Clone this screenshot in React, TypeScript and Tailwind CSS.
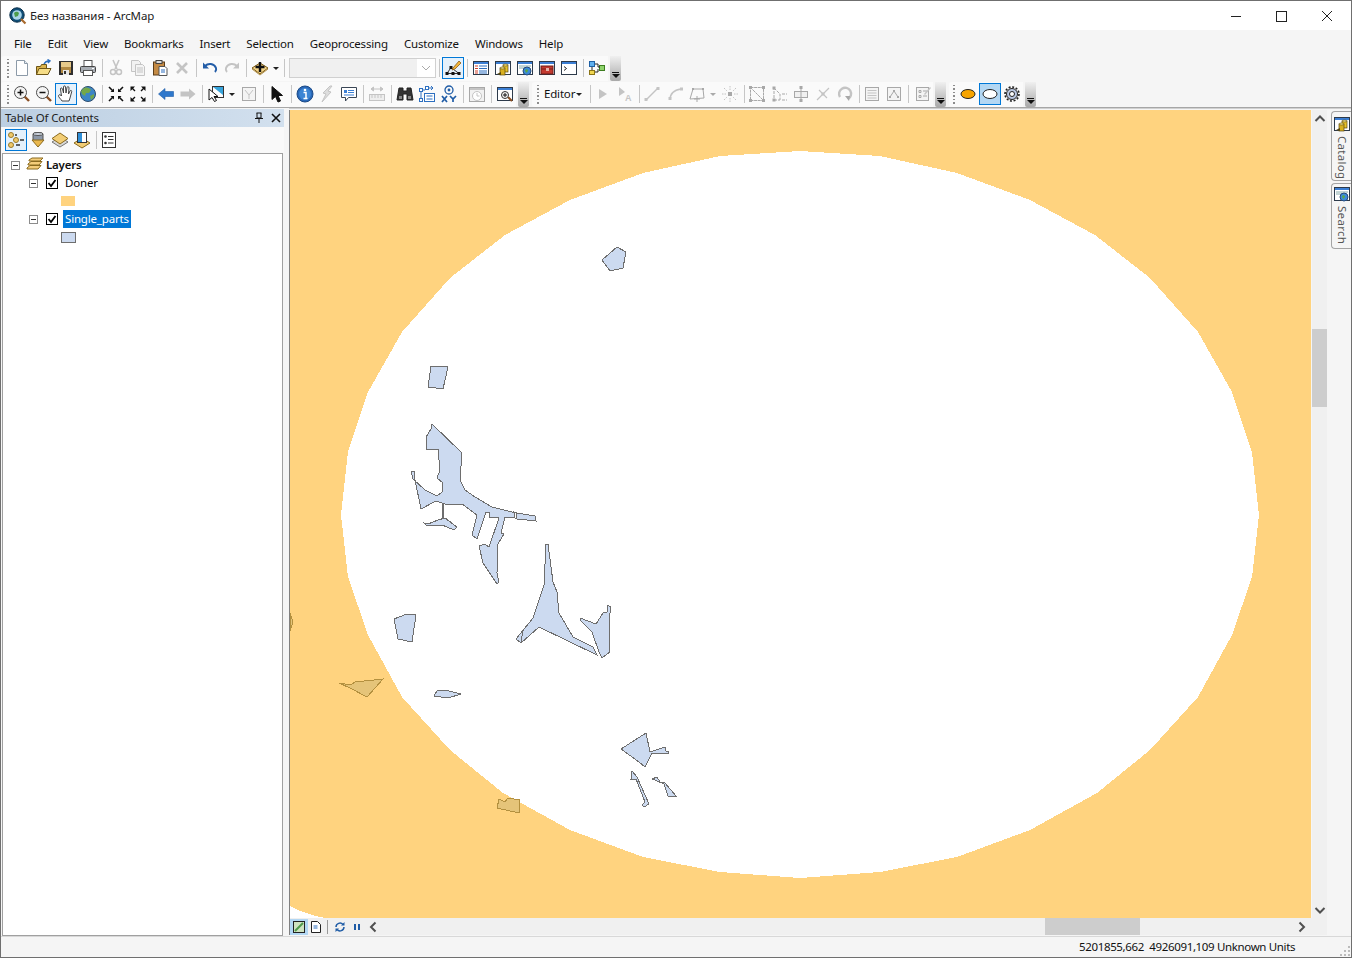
import React from "react";

type P = { children?: React.ReactNode; s?: number };
const S = ({ children, s = 18 }: P) => (
  <svg width={s} height={s} viewBox="0 0 18 18" fill="none" className="block shrink-0">{children}</svg>
);
const G = "#c4c4c4";
const GD = "#a8a8a8";

const WinBase = ({ children }: P) => (
  <S>
    <rect x="1.5" y="2.5" width="15" height="13" fill="#fff" stroke="#2d3a4a" />
    <rect x="2" y="3" width="14" height="2" fill="#3c7fd4" />
    {children}
  </S>
);
const Cyl = ({ x, y, c = "#e8c22a" }: { x: number; y: number; c?: string }) => (
  <g>
    <rect x={x} y={y} width="5" height="7" fill={c} stroke="#5c4a10" strokeWidth=".7" />
    <ellipse cx={x + 2.5} cy={y} rx="2.5" ry="1" fill="#f7e98a" stroke="#5c4a10" strokeWidth=".6" />
  </g>
);
const I: Record<string, React.ReactNode> = {
  newDoc: <S><path d="M3.5 1.5h8l3 3v12h-11z" fill="#fff" stroke="#8c9aa8" /><path d="M11.5 1.5v3h3" stroke="#8c9aa8" fill="#e4ecf4" /></S>,
  open: <S><path d="M1.5 7.5h4l1-2h5v10h-10z" fill="#d9b34c" stroke="#6d5518" /><path d="M1.5 15.5l2.5-6h12l-3 6z" fill="#f6dd87" stroke="#6d5518" /><path d="M9 5c1-2 3-3 5-3M12.5 0.5l2.5 1.5-2 2" stroke="#2c6fc0" strokeWidth="1.4" /></S>,
  save: <S><rect x="2" y="2" width="14" height="14" fill="#2f2f2f" /><rect x="4" y="3" width="10" height="5" fill="#e6c98a" /><rect x="4" y="8" width="10" height="6" fill="#b28a43" /><rect x="6" y="11" width="6" height="5" fill="#e8e8e8" /><rect x="7" y="12" width="2" height="3" fill="#333" /></S>,
  print: <S><rect x="5" y="1.5" width="8" height="6" fill="#fff" stroke="#555" /><rect x="1.5" y="7.5" width="15" height="6" rx="1" fill="#a8adb3" stroke="#444" /><rect x="4.5" y="11.5" width="9" height="5" fill="#fff" stroke="#555" /><rect x="13" y="9" width="2" height="1" fill="#fff" /></S>,
  cut: <S><path d="M6 1l4 9M12 1L8 10" stroke={G} strokeWidth="1.6" /><circle cx="6" cy="13" r="2.5" stroke={G} strokeWidth="1.5" /><circle cx="12" cy="13" r="2.5" stroke={G} strokeWidth="1.5" /></S>,
  copy: <S><path d="M2.5 1.5h7l2 2v9h-9z" fill="#f2f2f2" stroke={G} /><path d="M6.5 5.5h7l2 2v9h-9z" fill="#f4f4f4" stroke={G} /><path d="M8 9h6M8 11h6M8 13h6" stroke={G} /></S>,
  paste: <S><rect x="2.5" y="3" width="11" height="13" fill="#c48a44" stroke="#5a3d1a" /><rect x="5" y="1.5" width="6" height="3" fill="#ddd" stroke="#444" /><path d="M8 7.5h6l2 2v7H8z" fill="#fff" stroke="#555" /><path d="M10 11h4M10 13h4" stroke="#2c6fc0" /></S>,
  del: <S><path d="M4 4l10 10M14 4L4 14" stroke={G} strokeWidth="2.6" /></S>,
  undo: <S><path d="M4 7c3-3 9-3 11 2 .5 1.5 0 3-1 4" stroke="#245ea8" strokeWidth="2" /><path d="M2 3.5v6h6z" fill="#245ea8" /></S>,
  redo: <S><path d="M14 7c-3-3-9-3-11 2-.5 1.5 0 3 1 4" stroke={G} strokeWidth="2" /><path d="M16 3.5v6h-6z" fill={G} /></S>,
  add: <S><path d="M1 9l8-5 8 5-8 6z" fill="#f3d489" stroke="#7c5a14" /><path d="M1 10l8 6 8-6" stroke="#b4924a" /><path d="M9 3v10M4.5 8h9" stroke="#111" strokeWidth="2.4" /></S>,
  edTool: <S><path d="M3 14.5h12M3 14.5l4-6 8 6" stroke="#333" /><rect x="1.5" y="13" width="3" height="3" fill="#111" /><rect x="7.5" y="13" width="3" height="3" fill="#111" /><rect x="13.5" y="13" width="3" height="3" fill="#111" /><rect x="5.5" y="7" width="3" height="3" fill="#111" /><path d="M9 9l6-7 2 2-6 6-3 1z" fill="#f2b63c" stroke="#8a5d1a" strokeWidth=".8" /></S>,
  table: <WinBase><path d="M3 7h3M3 9.500h3M3 12h3M3 14h3" stroke="#d1432b" /><path d="M7 7h8M7 9.500h8M7 12h8M7 14h8" stroke="#2c6fc0" /></WinBase>,
  catalog: <WinBase><Cyl x={9} y={6} /><Cyl x={6} y={9} c="#d8b020" /><path d="M3 15l4-2v3z" fill="#5a4a10" /></WinBase>,
  search: <WinBase><path d="M3 7h12M3 9h7" stroke="#8aa" /><circle cx="11" cy="12" r="4" fill="#3c8ad8" stroke="#264a7a" /><path d="M9 11c1-1 3-1 3 1l-2 2z" fill="#5ba845" /></WinBase>,
  toolbox: <WinBase><rect x="3" y="7" width="12" height="8" fill="#c4392f" stroke="#6e1d18" /><path d="M3 10h12" stroke="#7a2119" /><rect x="8" y="9" width="3" height="3" fill="#e9b1a6" /></WinBase>,
  python: <WinBase><path d="M4 7.500l2.500 2-2.500 2" stroke="#222" /></WinBase>,
  model: <S><rect x="1.500" y="2.500" width="5" height="5" fill="#5fb0ef" stroke="#1e5fa4" /><rect x="1.500" y="11.500" width="5" height="4" fill="#efd54f" stroke="#8a7416" /><rect x="11.500" y="6.500" width="5" height="5" fill="#8ed36c" stroke="#3d7d20" /><path d="M4 8v3M7 5h3v3h2M7 13h3v-3" stroke="#222" /></S>,
  zoomIn: <S><path d="M11 11l5 5" stroke="#8a4f24" strokeWidth="2.4" /><circle cx="7.500" cy="7.500" r="6" fill="#f4f4f4" stroke="#4c4c4c" /><path d="M7.500 4.500v6M4.500 7.500h6" stroke="#111" strokeWidth="1.500" /></S>,
  zoomOut: <S><path d="M11 11l5 5" stroke="#8a4f24" strokeWidth="2.4" /><circle cx="7.500" cy="7.500" r="6" fill="#f4f4f4" stroke="#4c4c4c" /><path d="M4.500 7.500h6" stroke="#111" strokeWidth="1.500" /></S>,
  pan: <S><path d="M5 16c-1-2-4-4-3.500-5.500S4 10 4.500 11L3.500 4c0-1.500 1.500-1.500 2 0L6.500 8l0-6c0-1.500 2-1.500 2 0l.5 6 1-5.500c.5-1.500 2-1 2 .5L11.500 9l1.500-3c.8-1.200 2-.5 1.700.7L13 13l-1 3z" fill="#fff" stroke="#333" strokeWidth=".9" /></S>,
  globe: <S><circle cx="9" cy="9" r="7.500" fill="#3d86c6" stroke="#2b4c6e" /><path d="M5 3c3-1 6 0 7 2l-2 3-3 0-1 3-3-2-1-3zM11 11l4-2 0 3-3 3z" fill="#74a84a" /></S>,
  zIn: <S><path d="M2 2l4 4M2 16l4-4M16 2l-4 4M16 16l-4-4" stroke="#111" strokeWidth="1.600" /><path d="M7 7H3.500L7 3.500zM11 7h3.500L11 3.500zM7 11H3.500L7 14.500zM11 11h3.500L11 14.500z" fill="#111" /></S>,
  zOut: <S><path d="M6 6L3 3M12 6l3-3M6 12l-3 3M12 12l3 3" stroke="#111" strokeWidth="1.400" /><path d="M1.500 1.500h4.500L1.500 6zM16.500 1.500H12L16.500 6zM1.500 16.500H6L1.500 12zM16.500 16.500H12L16.500 12z" fill="#111" /></S>,
  back: <S><path d="M1.500 9L8 3.500V6.500h8.500v5H8v3z" fill="#2f78cc" stroke="#1f5ca6" strokeWidth=".6" /></S>,
  fwd: <S><path d="M16.500 9L10 3.500V6.500H1.500v5H10v3z" fill={G} /></S>,
  selF: <S><rect x="5.500" y="1.500" width="11" height="11" fill="#fff" stroke="#333" /><path d="M6 2h10v8z" fill="#37a4dc" /><path d="M2 4l0 11 3-2.500 2.500 4 2-1-2.500-4h4z" fill="#fff" stroke="#111" /></S>,
  clr: <S><rect x="2.500" y="2.500" width="13" height="13" fill="#f4f4f4" stroke={GD} /><path d="M5 5l4 5 4-5M9 10v4" stroke={G} /></S>,
  ptr: <S><path d="M4 1.500v13l3.500-3 2.500 5.500 2.500-1-2.500-5.500h4.500z" fill="#111" stroke="#111" /></S>,
  info: <S><circle cx="9" cy="9" r="8" fill="#2968b8" stroke="#1c4a86" /><circle cx="9" cy="9" r="6" fill="#3d86d4" /><circle cx="9" cy="5" r="1.300" fill="#fff" /><path d="M7.500 7.500h2.500v6M7.500 13.500h4" stroke="#fff" strokeWidth="1.500" /></S>,
  link: <S><path d="M12 1L5 8l3 1-4 8 9-10-3-1 4-5z" fill="#ddd" stroke={G} /></S>,
  popup: <S><path d="M1.500 2.500h15v10h-8l-3 3.500v-3.500h-4z" fill="#fff" stroke="#3a4656" /><rect x="4" y="5" width="3" height="3" fill="#3c7fd4" /><path d="M8 5.500h6M8 7.500h6M4 10h10" stroke="#3c7fd4" /></S>,
  measure: <S><path d="M3 4h12M3 4l2.500-2v4zM15 4l-2.500-2v4z" fill={G} stroke={G} /><rect x="1.500" y="9.500" width="15" height="6" fill="#eee" stroke={G} /><path d="M4 10v3M7 10v3M10 10v3M13 10v3" stroke={G} /></S>,
  find: <S><path d="M3 3h4v3h4V3h4l2 12h-6V9H7v6H1z" fill="#333" stroke="#222" /><rect x="3" y="11" width="3" height="3" fill="#888" /><rect x="12" y="11" width="3" height="3" fill="#888" /></S>,
  route: <S><rect x="1.500" y="3.500" width="3" height="3" fill="#fff" stroke="#2c6fc0" /><rect x="7.500" y="1.500" width="3" height="3" fill="#fff" stroke="#2c6fc0" /><rect x="1.500" y="13.500" width="3" height="3" fill="#fff" stroke="#2c6fc0" /><path d="M3 7v6M5 5h2M11 3h4M13 1l2 2-2 2" stroke="#2c6fc0" /><rect x="6.500" y="8.500" width="10" height="8" fill="#fff" stroke="#2c6fc0" /><path d="M8.500 11h6M8.500 14h6" stroke="#2c6fc0" /></S>,
  xy: <S><circle cx="9" cy="5" r="4" stroke="#1f5ca6" strokeWidth="1.300" /><circle cx="9" cy="5" r="1.400" fill="#1f5ca6" /><path d="M2 11l5 6M7 11l-5 6M10 11l3 3 3-3M13 14v3" stroke="#1f5ca6" strokeWidth="1.700" /></S>,
  time: <S><rect x="1.500" y="2.500" width="15" height="14" fill="#f2f2f2" stroke={GD} /><rect x="2" y="3" width="14" height="2" fill={G} /><circle cx="9" cy="11" r="4.500" fill="#fff" stroke={G} /><path d="M9 8v3h2.500" stroke={G} /></S>,
  viewer: <WinBase><path d="M12 12l4 4" stroke="#8a4f24" strokeWidth="2" /><circle cx="9" cy="10" r="3.500" fill="#f4f4f4" stroke="#333" /><path d="M9 8v4M7 10h4" stroke="#111" /></WinBase>,
  e1: <S><path d="M5 4v10l8-5z" fill={G} /></S>,
  e2: <S><path d="M3 2v9l6-4z" fill={G} /><text x="9" y="16" fontSize="9" fontWeight="700" fill={G} fontFamily="Liberation Sans">A</text></S>,
  e3: <S><path d="M3 15L15 3" stroke={G} strokeWidth="1.500" /><rect x="1.500" y="13" width="3" height="3" fill={G} /><rect x="13.500" y="2" width="3" height="3" fill={G} /></S>,
  e4: <S><path d="M3 15c0-6 4-10 11-11" stroke={G} strokeWidth="1.500" /><rect x="1.500" y="12" width="3" height="3" fill={G} /><rect x="13" y="2.500" width="3" height="3" fill={G} /></S>,
  e5: <S><path d="M2 14l3-10h10l1 9z" stroke={GD} /><path d="M6 14h6M9 11v6" stroke={GD} /><rect x="4" y="3" width="2" height="2" fill={GD} /><rect x="14" y="3" width="2" height="2" fill={GD} /></S>,
  e6: <S><rect x="7" y="7" width="4" height="4" fill={GD} /><path d="M9 1v4M9 13v4M1 9h4M13 9h4M3 3l3 3M15 3l-3 3M3 15l3-3M15 15l-3-3" stroke={G} strokeDasharray="1.500 1" /></S>,
  e7: <S><path d="M2.500 2.500h13v13h-13zM2.500 2.500l13 13" stroke={GD} strokeDasharray="3 .6" /><rect x="1" y="1" width="3" height="3" fill={GD} /><rect x="14" y="14" width="3" height="3" fill={GD} /><rect x="1" y="14" width="3" height="3" fill={GD} /><rect x="14" y="1" width="3" height="3" fill={GD} /></S>,
  e8: <S><path d="M3 2v14M3 3l6 6v6M3 15h6M11 9h5M11 15h5" stroke={GD} strokeDasharray="3 1" /><rect x="1.500" y="1.500" width="3" height="3" fill={GD} /><rect x="1.500" y="13.500" width="3" height="3" fill={GD} /></S>,
  e9: <S><rect x="2.500" y="6.500" width="13" height="6" fill="#f0f0f0" stroke={GD} /><path d="M9 2v14" stroke={GD} /><rect x="7.500" y="1" width="3" height="3" fill={GD} /><rect x="7.500" y="14" width="3" height="3" fill={GD} /></S>,
  e10: <S><path d="M3 15L15 3M5 5l8 8" stroke={G} strokeWidth="1.200" /><rect x="7.500" y="7.500" width="3" height="3" fill={G} /></S>,
  e11: <S><path d="M4 12a6 6 0 1 1 8 2" stroke={G} strokeWidth="2.400" /><path d="M9 11l5 0-1 5z" fill={GD} /></S>,
  e12: <S><rect x="2.500" y="2.500" width="13" height="13" fill="#f4f4f4" stroke={GD} /><path d="M4.500 5.500h9M4.500 8h9M4.500 10.500h9M4.500 13h9" stroke={G} /></S>,
  e13: <S><rect x="2.500" y="2.500" width="13" height="13" fill="#f4f4f4" stroke={GD} /><path d="M5 12l4-6 4 6" stroke={GD} /><rect x="8" y="5" width="2" height="2" fill={GD} /><rect x="4" y="11" width="2" height="2" fill={GD} /><rect x="12" y="11" width="2" height="2" fill={GD} /></S>,
  e14: <S><rect x="2.500" y="2.500" width="12" height="13" fill="#f4f4f4" stroke={GD} /><path d="M5 5.500h2v2H5zM5 10.500h2v2H5zM9 6h4M9 11h4" stroke={GD} /><path d="M10 9l6-7 1 1-6 7z" fill={G} /></S>,
  sketchFill: <S><ellipse cx="9" cy="9" rx="7" ry="4.500" fill="#f6a400" stroke="#222" /></S>,
  sketchOut: <S><ellipse cx="9" cy="9" rx="7" ry="4.500" fill="#fff" stroke="#222" /></S>,
  gear: <S><circle cx="9" cy="9" r="5.500" fill="#b9c6e0" stroke="#222" /><circle cx="9" cy="9" r="7" stroke="#222" strokeWidth="1.600" strokeDasharray="2 1.660" /><circle cx="9" cy="9" r="2.500" fill="#fff" stroke="#222" /></S>,
  tocList: <S><circle cx="4" cy="4" r="2.500" fill="#f0c96a" stroke="#9a7a28" /><circle cx="9" cy="9" r="2.500" fill="#f0c96a" stroke="#9a7a28" /><circle cx="4" cy="14" r="2.500" fill="#f0c96a" stroke="#9a7a28" /><path d="M13 9h4M9 14h4M8 4h2" stroke="#333" strokeWidth="1.400" /></S>,
  tocSrc: <S><path d="M4 9v-6c0-2 10-2 10 0v6" fill="#8d98a8" stroke="#555" /><ellipse cx="9" cy="3" rx="5" ry="1.500" fill="#cfd6e0" stroke="#555" /><path d="M3 9h12l-6 7z" fill="#eab84e" stroke="#8a6a1e" /></S>,
  tocVis: <S><path d="M1 11l8-5 8 5-8 5z" fill="#d8d8d8" stroke="#777" /><path d="M1 7.500l8-5.500 8 5.500-8 5.500z" fill="#f2cd74" stroke="#8a6a1e" /></S>,
  tocSel: <S><path d="M1 12l8-5 8 5-8 5z" fill="#f2cd74" stroke="#8a6a1e" /><rect x="4.500" y="1.500" width="9" height="10" fill="#fff" stroke="#333" /><path d="M5 2h4v9H5z" fill="#2f8fd8" /></S>,
  tocOpt: <S><rect x="2.500" y="1.500" width="13" height="15" fill="#fff" stroke="#333" /><circle cx="5.500" cy="5.500" r="1.300" fill="#333" /><circle cx="5.500" cy="12" r="1.300" fill="#333" /><path d="M8 5.500h5.500M8 8.500h5.500M8 12h5.500" stroke="#333" /></S>,
  layers: <S><path d="M3 4l3-2h11l-3 3H3z" fill="#f4cd7a" stroke="#8a6a1e" /><path d="M2 8l3-2.500h11L13 9H2z" fill="#f4cd7a" stroke="#8a6a1e" /><path d="M1 12l3-2.500h11L12 13H1z" fill="#f4cd7a" stroke="#8a6a1e" /></S>,
  appIcon: <S s={18}><circle cx="8" cy="8" r="7.200" fill="#0f4e78" stroke="#0b2f4a" /><circle cx="8" cy="8" r="4.800" fill="#a9d4ea" /><path d="M5 6c2-2 4-1 5 0l-1 3-3 1z" fill="#4d9b4a" /><path d="M12 12l4.500 4.500" stroke="#a86a2e" strokeWidth="2.200" /></S>,
};

const Btn = ({ n, on, cls = "" }: { n: string; on?: boolean; cls?: string }) => (
  <div className={`w-[22px] h-[22px] flex items-center justify-center shrink-0 ${on ? "border border-[#0078d7] bg-[#e5f1fb]" : ""} ${cls}`}>
    {I[n]}
  </div>
);
const Sep = ({ w = 6 }: { w?: number }) => (
  <div className="flex justify-center shrink-0" style={{ width: w }}>
    <div className="w-px h-[18px] bg-[#c6c6c6]" />
  </div>
);
const Caret = ({ c = "#222", w = 9 }: { c?: string; w?: number }) => (
  <div className="h-[22px] flex items-center justify-center shrink-0" style={{ width: w }}>
    <div className="w-0 h-0 border-l-[3px] border-r-[3px] border-t-[3px] border-l-transparent border-r-transparent" style={{ borderTopColor: c }} />
  </div>
);
const Grip = () => (
  <div className="w-[7px] flex flex-col items-center gap-[2px] shrink-0">
    {[0, 1, 2, 3, 4, 5].map((i) => <div key={i} className="w-[2px] h-[1.5px] bg-[#8c8c8c]" />)}
  </div>
);
const Over = () => (
  <div className="w-[11px] h-[25px] ml-[2px] shrink-0 rounded-b-[2px] bg-gradient-to-b from-[#f0f0f0] to-[#a9a9a9] flex flex-col items-center justify-end pb-[3px]">
    <div className="w-[7px] h-px bg-[#111] mb-[1px]" />
    <div className="w-0 h-0 border-l-[4px] border-r-[4px] border-t-[4px] border-l-transparent border-r-transparent border-t-[#111]" />
  </div>
);
const Bar = ({ children, cls = "" }: { children: React.ReactNode; cls?: string }) => (
  <div className={`flex items-center h-[25px] bg-[#fafafa] rounded-l-[3px] ${cls}`}>{children}</div>
);

const MENU = ["File", "Edit", "View", "Bookmarks", "Insert", "Selection", "Geoprocessing", "Customize", "Windows", "Help"];

const BLUE = "#ccdaf0";
const LINE = "#6e6e6e";
const parts = [
  "602,260 617,247 626,252 623,268 610,271",
  "431,366 448,367 443,389 428,387",
  "432,424 431,429 426,437 426,449 438,449 440,470 437,478 443,483 442,492 437,496 425,490 413,479 411,471 414,471 415,480 421,509 436,501 445,504 462,504 477,515 472,535 477,539 486,512 490,513 489,517 499,518 489,547 485,544 479,546 483,563 497,584 499,582 497,573 498,544 504,534 501,533 505,517 515,518 514,512 517,513 535,516 536,521 517,519 516,513 492,507 475,497 465,490 460,480 462,453",
  "424,523 427,526 442,525 454,530 457,527 445,518 438,520 428,524",
  "546,544 548,544 553,582 557,592 559,613 573,637 593,647 597,655 539,627 521,643 516,639 533,618 544,585",
  "580,618 596,624 603,613 607,612 607,605 611,607 609,620 610,652 602,658 599,652 592,632 580,620",
  "394,619 407,614 416,615 412,642 398,639",
  "434,696 437,691 445,690 461,694 448,698",
  "621,749 646,733 650,752 665,747 666,751 669,752 668,754 652,753 645,767 639,762",
  "632,771 637,777 649,804 644,807 642,805 645,802 636,779 631,779",
  "652,779 657,777 660,782 665,783 676,796 668,796 664,784 655,780",
];
const hole = "800,151 880,156 957,173 1030,200 1095,235 1150,278 1198,332 1232,392 1252,452 1259,515 1252,577 1232,635 1198,697 1150,750 1097,793 1030,830 957,857 880,872 800,878 720,872 643,857 570,830 503,793 450,750 402,697 368,635 348,577 341,515 348,452 368,392 402,332 450,278 505,235 570,200 643,173 720,156";

const MapView = () => (
  <svg viewBox="290 110 1021 808" width="1021" height="808" className="block" shapeRendering="crispEdges">
    <rect x="290" y="110" width="1021" height="808" fill="#ffd37f" />
    <polygon points={hole} fill="#fff" />
    <polygon points="290,906 300,911 312,915 325,918 290,918" fill="#fff" />
    {parts.map((p, i) => <polygon key={i} points={p} fill={BLUE} stroke={LINE} strokeWidth="1" />)}
    <path d="M443 504V518" stroke={LINE} strokeWidth="1.500" />
    <path d="M521 643L523 630" stroke={LINE} strokeWidth="1" />
    <polygon points="339,683 351,685 355,682 383,679 367,697 350,688" fill="#e5c479" stroke="#b3903f" />
    <polygon points="497,808 499,799 505,802 508,798 520,800 519,813" fill="#e5c479" stroke="#b3903f" />
    <polygon points="290,613 293,622 290,631" fill="#e5c479" stroke="#b3903f" />
  </svg>
);

const Chev = ({ d }: { d: string }) => (
  <svg width="12" height="12" viewBox="0 0 12 12" className="block"><path d={d} stroke="#505050" strokeWidth="2" fill="none" /></svg>
);

const Box = () => (
  <div className="w-[9px] h-[9px] border border-[#8c8c8c] bg-white flex items-center justify-center shrink-0">
    <div className="w-[5px] h-px bg-[#333]" />
  </div>
);
const Node = ({ label, sel }: { label: string; sel?: boolean }) => (
  <div className="flex items-center h-[18px] pl-[26px]">
    <Box />
    <div className="w-[12px] h-[12px] ml-[8px] border border-black bg-white flex items-center justify-center shrink-0">
      <svg width="10" height="10" viewBox="0 0 10 10"><path d="M1.500 5l2.500 3 4.500-6" stroke="#000" strokeWidth="1.800" fill="none" /></svg>
    </div>
    <span className={`ml-[5px] px-[2px] h-[18px] leading-[17px] ${sel ? "bg-[#0078d7] text-white" : "text-black"}`}>{label}</span>
  </div>
);

export default function App() {
  return (
    <div className="w-[1352px] h-[958px] box-border border border-[#6f6f6f] bg-[#f5f5f5] flex flex-col overflow-hidden text-[11.5px] tracking-[-0.18px] text-[#111]" style={{ fontFamily: '"Noto Sans", "Liberation Sans", sans-serif' }}>
      {/* title */}
      <div className="h-[29px] shrink-0 bg-white flex items-center pl-[8px]">
        {I.appIcon}
        <span className="ml-[3px] text-[#222] tracking-[-0.07px]">Без названия - ArcMap</span>
        <div className="ml-auto flex items-center">
          <svg width="102" height="12" viewBox="0 0 102 12" className="mr-[18px]">
            <path d="M0 6.500h10" stroke="#222" />
            <rect x="45.500" y="1.500" width="10" height="10" fill="none" stroke="#222" />
            <path d="M91 1l10 10M101 1L91 11" stroke="#222" />
          </svg>
        </div>
      </div>
      {/* menu */}
      <div className="h-[25px] pt-[3px] shrink-0 flex items-center pl-[5px]">
        {MENU.map((m) => <span key={m} className="px-[8px] whitespace-nowrap">{m}</span>)}
      </div>
      {/* toolbar 1 */}
      <div className="h-[26px] shrink-0 flex items-center">
        <Bar cls="pl-[3px]">
          <Grip />
          <Btn n="newDoc" /><Btn n="open" /><Btn n="save" /><Btn n="print" /><Sep />
          <Btn n="cut" /><Btn n="copy" /><Btn n="paste" /><Btn n="del" /><Sep />
          <Btn n="undo" /><Btn n="redo" /><Sep />
          <Btn n="add" /><Caret /><Sep w={8} />
          <div className="w-[147px] ml-px h-[20px] border border-[#d0d0d0] bg-[#f4f4f4] flex shrink-0">
            <div className="w-[127px] bg-[#f0f0f0]" />
            <div className="flex-1 bg-white flex items-center justify-center">
              <svg width="10" height="6" viewBox="0 0 10 6"><path d="M1 1l4 4 4-4" stroke="#aaa" fill="none" /></svg>
            </div>
          </div>
          <Sep />
          <Btn n="edTool" on /><Sep />
          <Btn n="table" /><Btn n="catalog" /><Btn n="search" /><Btn n="toolbox" /><Btn n="python" /><Sep />
          <Btn n="model" />
        </Bar>
        <Over />
      </div>
      {/* toolbar 2 */}
      <div className="h-[26px] shrink-0 flex items-center border-b border-[#a6a6a6] box-content">
        <Bar cls="pl-[3px]">
          <Grip />
          <Btn n="zoomIn" /><Btn n="zoomOut" /><Btn n="pan" on /><Btn n="globe" /><Sep />
          <Btn n="zIn" /><Btn n="zOut" /><Sep />
          <Btn n="back" /><Btn n="fwd" /><Sep />
          <Btn n="selF" /><Caret /><Btn n="clr" cls="ml-[2px]" /><Sep />
          <Btn n="ptr" /><Sep />
          <Btn n="info" /><Btn n="link" /><Btn n="popup" /><Sep />
          <Btn n="measure" /><Sep />
          <Btn n="find" /><Btn n="route" /><Btn n="xy" /><Sep />
          <Btn n="time" /><Sep />
          <Btn n="viewer" />
        </Bar>
        <Over />
        <Bar cls="ml-[3px] pl-[2px]">
          <Grip />
          <span className="w-[46px] shrink-0 pl-[3px] flex items-center">Editor<Caret w={8} /></span>
          <Sep />
          <Btn n="e1" cls="-ml-[1px]" /><Btn n="e2" /><Sep />
          <Btn n="e3" cls="-ml-px" /><Btn n="e4" cls="ml-[2px]" /><Btn n="e5" cls="-ml-px" /><Caret c="#aaa" /><Btn n="e6" cls="ml-[2px]" /><Sep />
          <Btn n="e7" cls="-ml-[1px]" /><Btn n="e8" cls="ml-px" /><Btn n="e9" cls="-ml-px" /><Btn n="e10" /><Btn n="e11" /><Sep />
          <Btn n="e12" cls="-ml-[1px]" /><Btn n="e13" /><Sep />
          <Btn n="e14" cls="ml-px -mr-px" />
        </Bar>
        <Over />
        <Bar cls="ml-[3px] pl-[1px]">
          <Grip />
          <Btn n="sketchFill" /><Btn n="sketchOut" on cls="!bg-[#b3d7f3]" /><Btn n="gear" />
        </Bar>
        <Over />
      </div>
      {/* main */}
      <div className="flex-1 min-h-0 flex">
        {/* TOC */}
        <div className="w-[283px] shrink-0 flex flex-col">
          <div className="h-[18px] mt-[1px] shrink-0 bg-gradient-to-r from-[#bccfe2] to-[#d2e0ee] flex items-center pl-[4px] pr-[3px]">
            <span className="text-[#222] tracking-[-0.13px]">Table Of Contents</span>
            <div className="ml-auto flex items-center gap-[7px]">
              <svg width="10" height="12" viewBox="0 0 10 12"><path d="M2.500 1h5M3 1v5h4V1M1 6.500h8M5 7v4" stroke="#111" fill="none" /></svg>
              <svg width="10" height="10" viewBox="0 0 10 10"><path d="M1 1l8 8M9 1L1 9" stroke="#111" strokeWidth="1.600" /></svg>
            </div>
          </div>
          <div className="h-[26px] shrink-0 flex items-center pl-[4px] bg-[#f9f9f9]">
            <Btn n="tocList" on /><Btn n="tocSrc" /><Btn n="tocVis" /><Btn n="tocSel" /><Sep />
            <Btn n="tocOpt" cls="-ml-px" />
          </div>
          <div className="flex-1 mx-[1px] border border-[#a0a0a0] bg-white pt-[1px]">
            <div className="flex items-center h-[18px] pl-[8px] mt-[1px]">
              <Box />
              <div className="ml-[6px]">{I.layers}</div>
              <span className="ml-[2px] font-semibold tracking-[-0.2px]">Layers</span>
            </div>
            <Node label="Doner" />
            <div className="h-[18px] pl-[58px] flex items-center"><div className="w-[14px] h-[10px] bg-[#ffd37f]" /></div>
            <Node label="Single_parts" sel />
            <div className="h-[18px] pl-[58px] flex items-center"><div className="w-[15px] h-[11px] bg-[#ccdaf0] border border-[#6e6e6e]" /></div>
          </div>
        </div>
        {/* map pane */}
        <div className="flex-1 min-w-0 flex flex-col pl-[5px]">
          <div className="flex border-t border-[#d0d0d0] pt-px">
            <div className="border-l border-[#808080]"><MapView /></div>
            <div className="relative ml-px w-[15px] h-[808px] bg-[#f0f0f0] flex flex-col items-center justify-between pt-[3px] pb-[2px] shrink-0">
              <Chev d="M1.500 8L6 3.500 10.500 8" />
              <div className="absolute left-0 top-[219px] w-[15px] h-[78px] bg-[#cdcdcd]" />
              <Chev d="M1.500 4L6 8.500 10.500 4" />
            </div>
            <div className="flex flex-col pl-[4px] pt-[1px] gap-[2px]">
              <div className="w-[21px] h-[70px] border border-r-0 border-[#a4a4a4] rounded-l-[4px] bg-[#f5f5f5] flex flex-col items-center pt-[3px]">
                {I.catalog}
                <span className="[writing-mode:vertical-rl] text-[#555] tracking-[0.3px] leading-none mt-[3px]">Catalog</span>
              </div>
              <div className="w-[21px] h-[66px] border border-r-0 border-[#a4a4a4] rounded-l-[4px] bg-[#f5f5f5] flex flex-col items-center pt-[1px]">
                {I.search}
                <span className="[writing-mode:vertical-rl] text-[#555] tracking-[0.3px] leading-none mt-[3px]">Search</span>
              </div>
            </div>
          </div>
          <div className="h-[17px] flex items-center w-[1038px] bg-[#f0f0f0] border-l border-[#808080]">
            <div className="w-[18px] h-[16px] bg-[#b3d7f3] flex items-center justify-center shrink-0">
              <svg width="12" height="12" viewBox="0 0 12 12"><rect x=".5" y=".5" width="11" height="11" fill="#cfe3c0" stroke="#222" /><path d="M2 10L10 2" stroke="#4f9b4a" strokeWidth="2" /></svg>
            </div>
            <div className="w-[16px] flex items-center justify-center shrink-0">
              <svg width="10" height="12" viewBox="0 0 10 12"><path d="M.5.5h6l3 3v8H.5z" fill="#fff" stroke="#222" /><path d="M2.500 5h4M2.500 7h4" stroke="#2c6fc0" /></svg>
            </div>
            <div className="w-px h-[14px] bg-[#999] ml-[3px] shrink-0" />
            <svg width="12" height="12" viewBox="0 0 12 12" className="ml-[6px] shrink-0"><path d="M2 6a4 4 0 0 1 7-2.500M10 6a4 4 0 0 1-7 2.500" stroke="#1f5ca6" strokeWidth="1.500" fill="none" /><path d="M10.500 1v3.500H7zM1.500 11V7.500H5z" fill="#1f5ca6" /></svg>
            <svg width="10" height="12" viewBox="0 0 10 12" className="ml-[6px] shrink-0"><rect x="2" y="3" width="2" height="6" fill="#1f5ca6" /><rect x="6" y="3" width="2" height="6" fill="#1f5ca6" /></svg>
            <div className="ml-[5px] shrink-0"><Chev d="M8.500 1.500L4 6l4.500 4.500" /></div>
            <div className="flex-1 relative h-full">
              <div className="absolute left-[666px] top-0 w-[95px] h-full bg-[#cdcdcd]" />
              <div className="absolute right-[19px] top-[3px]"><Chev d="M3.500 1.500L8 6l-4.500 4.500" /></div>
            </div>
          </div>
        </div>
      </div>
      {/* status */}
      <div className="h-[21px] shrink-0 border-t border-[#d8d8d8] flex items-center relative">
        <span className="ml-[1078px] tracking-[-0.35px] whitespace-nowrap">5201855,662&nbsp; 4926091,109 Unknown Units</span>
        <svg width="12" height="12" viewBox="0 0 12 12" className="absolute right-0 bottom-0"><path d="M9 1h2v2H9zM5 5h2v2H5zM9 5h2v2H9zM1 9h2v2H1zM5 9h2v2H5zM9 9h2v2H9z" fill="#bbb" /></svg>
      </div>
    </div>
  );
}
